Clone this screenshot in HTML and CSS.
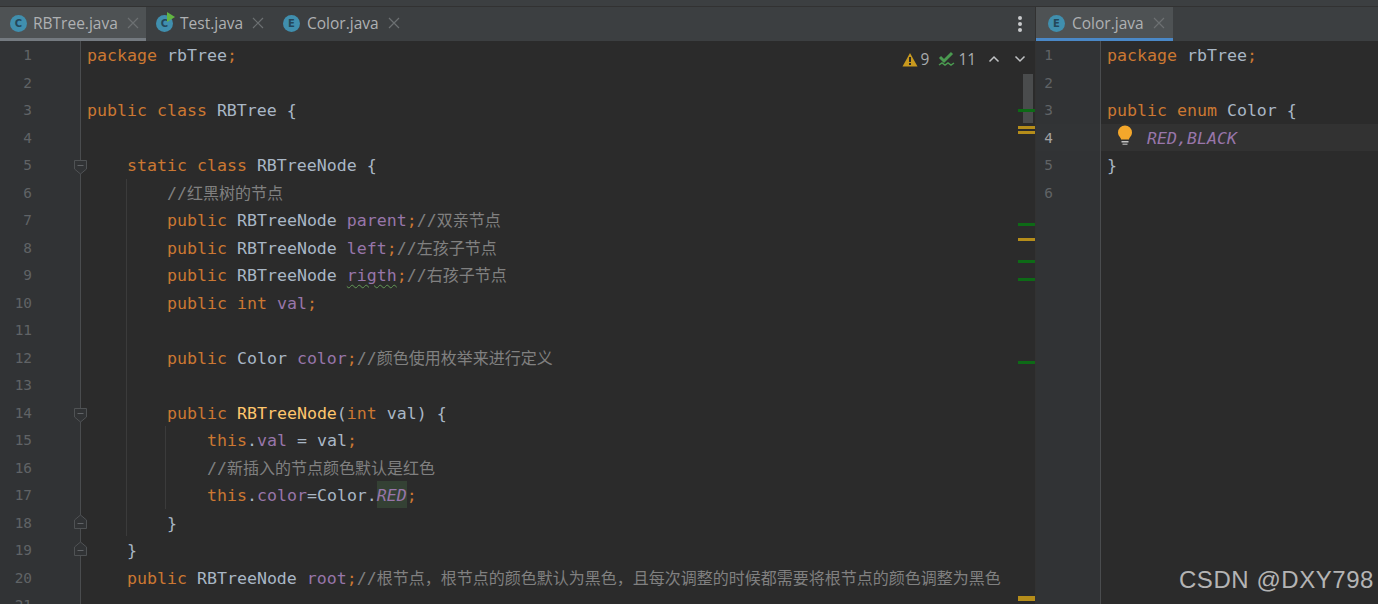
FILE: index.html
```html
<!DOCTYPE html>
<html lang="zh">
<head>
<meta charset="utf-8">
<title>RBTree.java</title>
<link rel="stylesheet" href="styles.css">
</head>
<body>
<div class="app">
  <div class="topstrip"></div>
  <div class="panes">
    <section class="pane pane-left">
      <div class="tabs">
        <div class="tab tab-active tab-rb"><span class="ficon">C</span><span class="tname">RBTree.java</span><svg class="tclose" width="12" height="12" viewBox="0 0 12 12"><path d="M1 1l10 10M11 1L1 11" stroke="#6c7072" stroke-width="1.200"/></svg></div>
        <div class="tab tab-test"><span class="ficon ficon-run">C<svg class="runmark" width="9" height="10" viewBox="0 0 9 10"><path d="M1 0l8 5-8 5z" fill="#62b543"/></svg></span><span class="tname">Test.java</span><svg class="tclose" width="12" height="12" viewBox="0 0 12 12"><path d="M1 1l10 10M11 1L1 11" stroke="#6c7072" stroke-width="1.200"/></svg></div>
        <div class="tab tab-color"><span class="ficon">E</span><span class="tname">Color.java</span><svg class="tclose" width="12" height="12" viewBox="0 0 12 12"><path d="M1 1l10 10M11 1L1 11" stroke="#6c7072" stroke-width="1.200"/></svg></div>
        <div class="tabs-fill"></div>
        <div class="dots"><i></i><i></i><i></i></div>
      </div>
      <div class="editor">
        <div class="gutter gutter-left">
          <div class="gl"><span class="num">1</span></div>
          <div class="gl"><span class="num">2</span></div>
          <div class="gl"><span class="num">3</span></div>
          <div class="gl"><span class="num">4</span></div>
          <div class="gl"><span class="num">5</span><svg class="fold fold-start" width="13" height="15" viewBox="0 0 13 15"><path d="M.5.5h12v8.500l-6 5-6-5z" fill="#313335" stroke="#4f5254"/><path d="M3.500 5.500h6" stroke="#606366"/></svg></div>
          <div class="gl"><span class="num">6</span></div>
          <div class="gl"><span class="num">7</span></div>
          <div class="gl"><span class="num">8</span></div>
          <div class="gl"><span class="num">9</span></div>
          <div class="gl"><span class="num">10</span></div>
          <div class="gl"><span class="num">11</span></div>
          <div class="gl"><span class="num">12</span></div>
          <div class="gl"><span class="num">13</span></div>
          <div class="gl"><span class="num">14</span><svg class="fold fold-start" width="13" height="15" viewBox="0 0 13 15"><path d="M.5.5h12v8.500l-6 5-6-5z" fill="#313335" stroke="#4f5254"/><path d="M3.500 5.500h6" stroke="#606366"/></svg></div>
          <div class="gl"><span class="num">15</span></div>
          <div class="gl"><span class="num">16</span></div>
          <div class="gl"><span class="num">17</span></div>
          <div class="gl"><span class="num">18</span><svg class="fold fold-end" width="13" height="15" viewBox="0 0 13 15"><path d="M.5 14.500h-0h12v-8.500l-6-5-6 5z" fill="#313335" stroke="#4f5254"/><path d="M3.500 9.500h6" stroke="#606366"/></svg></div>
          <div class="gl"><span class="num">19</span><svg class="fold fold-end" width="13" height="15" viewBox="0 0 13 15"><path d="M.5 14.500h-0h12v-8.500l-6-5-6 5z" fill="#313335" stroke="#4f5254"/><path d="M3.500 9.500h6" stroke="#606366"/></svg></div>
          <div class="gl"><span class="num">20</span></div>
          <div class="gl"><span class="num">21</span></div>
        </div>
        <div class="code">
          <div class="ln"><b>package</b> rbTree<b>;</b></div>
          <div class="ln"></div>
          <div class="ln"><b>public class</b> RBTree {</div>
          <div class="ln"></div>
          <div class="ln in1"><b>static class</b> RBTreeNode {</div>
          <div class="guide1">
            <div class="ln"><u>//<span class="zh">红黑树的节点</span></u></div>
            <div class="ln"><b>public</b> RBTreeNode <em>parent</em><b>;</b><u>//<span class="zh">双亲节点</span></u></div>
            <div class="ln"><b>public</b> RBTreeNode <em>left</em><b>;</b><u>//<span class="zh">左孩子节点</span></u></div>
            <div class="ln"><b>public</b> RBTreeNode <em class="typo">rigth</em><b>;</b><u>//<span class="zh">右孩子节点</span></u></div>
            <div class="ln"><b>public int</b> <em>val</em><b>;</b></div>
            <div class="ln"></div>
            <div class="ln"><b>public</b> Color <em>color</em><b>;</b><u>//<span class="zh">颜色使用枚举来进行定义</span></u></div>
            <div class="ln"></div>
            <div class="ln"><b>public</b> <span class="meth">RBTreeNode</span>(<b>int</b> val) {</div>
            <div class="guide2">
              <div class="ln"><b>this</b>.<em>val</em> = val<b>;</b></div>
              <div class="ln"><u>//<span class="zh">新插入的节点颜色默认是红色</span></u></div>
              <div class="ln"><b>this</b>.<em>color</em>=Color.<em class="const hl">RED</em><b>;</b></div>
            </div>
            <div class="ln">}</div>
          </div>
          <div class="ln in1">}</div>
          <div class="ln in1"><b>public</b> RBTreeNode <em>root</em><b>;</b><u>//<span class="zh">根节点，根节点的颜色默认为黑色，且每次调整的时候都需要将根节点的颜色调整为黑色</span></u></div>
        </div>
        <div class="inspect">
          <svg class="ic-warn" width="16" height="15" viewBox="0 0 16 15"><path d="M8 1L15.500 14.500H.5z" fill="#c99a1e"/><path d="M7 5h2v5H7zM7 11h2v2H7z" fill="#2b2b2b"/></svg>
          <span class="count">9</span>
          <svg class="ic-typo" width="18" height="17" viewBox="0 0 18 17"><path d="M2 6l4 4 8-8" fill="none" stroke="#4a9a50" stroke-width="3"/><path d="M1 14l3-2 3 2 3-2 3 2 3-2" fill="none" stroke="#4a9a50" stroke-width="1.500"/></svg>
          <span class="count">11</span>
          <svg class="chev chev-up" width="12" height="8" viewBox="0 0 12 8"><path d="M1.500 6.500L6 2l4.500 4.500" fill="none" stroke="#c0c2c4" stroke-width="1.500"/></svg>
          <svg class="chev chev-down" width="12" height="8" viewBox="0 0 12 8"><path d="M1.500 1.500L6 6l4.500-4.500" fill="none" stroke="#c0c2c4" stroke-width="1.500"/></svg>
        </div>
        <div class="thumb"></div>
        <i class="mark green m1"></i>
        <i class="mark yellow m2"></i>
        <i class="mark yellow m3"></i>
        <i class="mark green m4"></i>
        <i class="mark yellow m5"></i>
        <i class="mark green m6"></i>
        <i class="mark green m7"></i>
        <i class="mark green m8"></i>
        <i class="mark yellow m9"></i>
      </div>
    </section>
    <section class="pane pane-right">
      <div class="tabs">
        <div class="tab tab-active tab-blue tab-right"><span class="ficon">E</span><span class="tname">Color.java</span><svg class="tclose" width="12" height="12" viewBox="0 0 12 12"><path d="M1 1l10 10M11 1L1 11" stroke="#6c7072" stroke-width="1.200"/></svg></div>
        <div class="tabs-fill"></div>
      </div>
      <div class="editor">
        <div class="gutter gutter-right">
          <div class="gl"><span class="num">1</span></div>
          <div class="gl"><span class="num">2</span></div>
          <div class="gl"><span class="num">3</span></div>
          <div class="gl gl-current"><span class="num">4</span></div>
          <div class="gl"><span class="num">5</span></div>
          <div class="gl"><span class="num">6</span></div>
        </div>
        <div class="code">
          <div class="ln"><b>package</b> rbTree<b>;</b></div>
          <div class="ln"></div>
          <div class="ln"><b>public enum</b> Color {</div>
          <div class="ln ln-current"><svg class="bulb" width="16" height="21" viewBox="0 0 16 21"><path d="M8 .5a7 7 0 0 1 7 7c0 2.600-1.500 4-2.500 5.500-.4.6-.5 1-.5 1.500H4c0-.5-.1-.9-.5-1.500C2.500 11.500 1 10.100 1 7.500a7 7 0 0 1 7-7z" fill="#f4a72b"/><path d="M4.500 16h7v1.500h-7z" fill="#c4c4c4"/><path d="M5.500 18.500h5V20h-5z" fill="#9a9a9a"/></svg><em class="const">RED</em><b class="const-comma">,</b><em class="const">BLACK</em></div>
          <div class="ln">}</div>
          <div class="ln"></div>
        </div>
      </div>
    </section>
  </div>
  <div class="watermark">CSDN @DXY798</div>
</div>
</body>
</html>
```
FILE: styles.css
```css
* { box-sizing: border-box; }
html, body { margin: 0; padding: 0; }
body { background: #2b2b2b; }

.app {
  position: relative;
  width: 1378px;
  height: 604px;
  overflow: hidden;
  display: flex;
  flex-direction: column;
  background: #2b2b2b;
}

.topstrip {
  height: 7px;
  flex: none;
  background: #3c3f41;
  border-bottom: 1px solid #323232;
}

.panes {
  flex: 1;
  min-height: 0;
  display: flex;
}

.pane {
  display: flex;
  flex-direction: column;
  min-width: 0;
}
.pane-left { width: 1036px; flex: none; border-right: 1px solid #323232; }
.pane-right { flex: 1; }

/* Tabs */
.tabs {
  height: 34px;
  flex: none;
  display: flex;
  background: #3c3f41;
  font-family: "Open Sans", "Noto Sans", sans-serif;
  font-size: 15.5px;
  color: #afb1b3;
}
.tabs-fill { flex: 1; }

.tab {
  display: flex;
  align-items: center;
  height: 34px;
  padding-top: 1px;
  padding-bottom: 3px;
  flex: none;
}
.tab-rb { width: 146px; padding-left: 10px; }
.tab-test { width: 127px; padding-left: 10px; }
.tab-color { width: 130px; padding-left: 10px; }
.tab-right { width: 137px; padding-left: 12px; }

.tab-active {
  background: #4e5254;
  border-bottom: 3px solid #747a80;
  padding-bottom: 0;
}
.tab-blue { border-bottom-color: #4a88c7; }

.ficon {
  position: relative;
  width: 17px;
  height: 17px;
  flex: none;
  border-radius: 50%;
  background: #408fae;
  color: #24475a;
  font-family: "DejaVu Sans", sans-serif;
  font-size: 10px;
  font-weight: 700;
  line-height: 17px;
  text-align: center;
}
.runmark { position: absolute; top: -3px; right: -2px; }

.tname { margin-left: 7px; }
.tab-rb .tname { margin-left: 6px; }
.tclose { margin-left: 9px; flex: none; }

.dots {
  width: 31px;
  flex: none;
  display: flex;
  flex-direction: column;
  align-items: center;
  justify-content: center;
  gap: 2px;
  padding-bottom: 1px;
}
.dots i {
  display: block;
  width: 4px;
  height: 4px;
  border-radius: 50%;
  background: #c8cacc;
}

/* Editor */
.editor {
  position: relative;
  flex: 1;
  min-height: 0;
  display: flex;
  overflow: hidden;
  background: #2b2b2b;
  font-family: "DejaVu Sans Mono", "Noto Sans CJK SC", monospace;
  font-size: 16.6px;
  color: #a9b7c6;
}

.gutter {
  flex: none;
  height: 100%;
  background: #313335;
  border-right: 1px solid #4a4c4e;
  font-size: 14.4px;
  color: #606366;
}
.gutter-left { width: 81px; }
.gutter-right { width: 65px; }

.gl {
  position: relative;
  height: 27.5px;
  line-height: 29px;
}
.num { display: block; width: 32px; text-align: right; }
.gutter-right .num { width: 17px; }
.gl-current { color: #a4a3a3; background: #323436; }
.fold { position: absolute; left: 74px; }
.fold-start { top: 9px; }
.fold-end { top: 5px; }

.code {
  flex: 1;
  min-width: 0;
  padding-left: 6px;
}
.ln {
  position: relative;
  height: 27.5px;
  line-height: 29px;
  white-space: pre;
}
.in1 { padding-left: 40px; }

.guide1 {
  margin-left: 39px;
  padding-left: 40px;
  border-left: 1px solid #3b3b3b;
}
.guide2 {
  margin-left: -2px;
  padding-left: 41px;
  border-left: 1px solid #3b3b3b;
}

.ln b { font-weight: 400; color: #cc7832; }
.ln em { font-style: normal; color: #9876aa; }
.ln u {
  text-decoration: none;
  color: #808080;
}
.zh { font-size: 16px; }
.meth { color: #ffc66d; }
.ln .const { font-style: italic; }
.hl { display: inline-block; height: 27px; vertical-align: top; background: #344134; }
.typo {
  text-decoration: underline wavy #629755 1px;
  text-underline-offset: 3px;
}

.ln-current {
  margin-left: -6px;
  padding-left: 46px;
  background: #323232;
}
.bulb { position: absolute; left: 16px; top: 1px; }
.ln .const-comma { color: #9876aa; font-style: italic; }

/* Inspection widget */
.inspect {
  position: absolute;
  top: 9px;
  right: 9px;
  height: 18px;
  display: flex;
  align-items: center;
  font-family: "Open Sans", "Noto Sans", sans-serif;
  font-size: 15.4px;
  color: #a9acae;
}
.count { margin-left: 3px; }
.ic-typo { margin-left: 9px; margin-right: -1px; }
.chev-up { margin-left: 12px; }
.chev-down { margin-left: 14px; }

.thumb {
  position: absolute;
  left: 1023px;
  top: 33px;
  width: 10px;
  height: 49px;
  background: #4a4c4d;
}

.mark {
  position: absolute;
  left: 1018px;
  width: 17px;
  height: 3px;
}
.green { background: #0d6a16; }
.yellow { background: #b58d1a; }
.m1 { top: 68px; }
.m2 { top: 85px; }
.m3 { top: 90px; }
.m4 { top: 182px; }
.m5 { top: 197px; }
.m6 { top: 219px; }
.m7 { top: 237px; }
.m8 { top: 320px; }
.m9 { top: 555px; height: 5px; }

.watermark {
  position: absolute;
  right: 4px;
  bottom: 10px;
  font-family: "Liberation Sans", sans-serif;
  font-size: 24px;
  line-height: 28px;
  color: #b4b4b4;
  letter-spacing: 0.55px;
}
```
